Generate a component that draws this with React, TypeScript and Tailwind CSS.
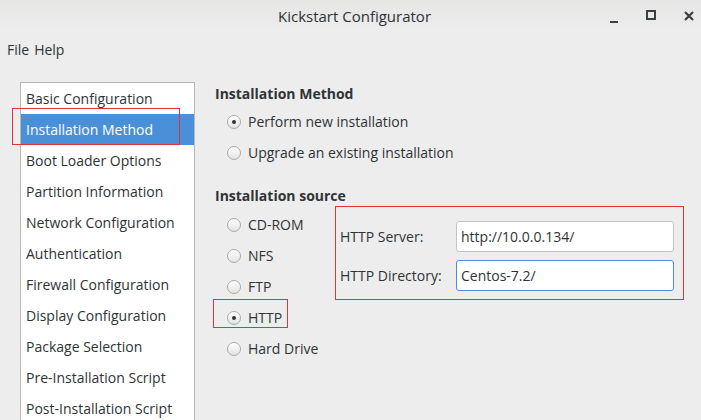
import React from "react";

const items = [
  "Basic Configuration",
  "Installation Method",
  "Boot Loader Options",
  "Partition Information",
  "Network Configuration",
  "Authentication",
  "Firewall Configuration",
  "Display Configuration",
  "Package Selection",
  "Pre-Installation Script",
  "Post-Installation Script",
];

function Radio({ checked }: { checked?: boolean }) {
  return (
    <span className="flex h-[14px] w-[14px] items-center justify-center rounded-full border border-[#a8aba6] bg-gradient-to-b from-[#ffffff] to-[#e3e3e1] shadow-[inset_0_1px_0_#fff]">
      {checked && <span className="h-[4px] w-[4px] rounded-full bg-[#2e3436]" />}
    </span>
  );
}

function RadioRow({ label, checked, boxed }: { label: string; checked?: boolean; boxed?: boolean }) {
  return (
    <div className="relative flex h-[31px] items-center gap-[7px] pl-[12px]">
      <Radio checked={checked} />
      <span>{label}</span>
      {boxed && (
        <div className="pointer-events-none absolute left-[-2px] top-[-3px] h-[29px] w-[75px] border border-[#d9383a]" />
      )}
    </div>
  );
}

export default function App() {
  return (
    <div
      className="relative h-[420px] w-[701px] overflow-hidden bg-[#ededed] text-[14px] text-[#2e3436]"
      style={{ fontFamily: '"Open Sans", "DejaVu Sans", sans-serif' }}
    >
      {/* Title bar */}
      <div className="flex h-[32px] items-center bg-gradient-to-b from-[#e6e6e5] to-[#ededed]">
        <div className="flex-1" />
        <div className="ml-[8px] text-[15px] text-[#2e3436]">Kickstart Configurator</div>
        <div className="flex flex-1 items-center justify-end">
          <svg width="20" height="20" viewBox="0 0 20 20" className="mr-[17px]">
            <rect x="6" y="15" width="8" height="2" fill="#3a3f41" />
          </svg>
          <svg width="20" height="20" viewBox="0 0 20 20" className="mr-[18px]">
            <rect x="6" y="5" width="8" height="8" fill="none" stroke="#3a3f41" strokeWidth="2" />
          </svg>
          <svg width="20" height="20" viewBox="0 0 20 20" className="mr-[2px]">
            <path d="M6 6 L14 14 M14 6 L6 14" stroke="#3a3f41" strokeWidth="2.2" />
          </svg>
        </div>
      </div>

      {/* Menu bar */}
      <div className="flex h-[34px] items-center gap-[5px] pl-[7px] text-[14px]">
        <span>File</span>
        <span>Help</span>
      </div>

      {/* Body */}
      <div className="flex pl-[20px] pt-[16px]">
        {/* Sidebar */}
        <div className="h-[400px] w-[175px] shrink-0 border border-[#b8b9b6] bg-white">
          {items.map((it, i) => (
            <div
              key={it}
              className={
                "relative flex h-[31px] items-center whitespace-nowrap pl-[5px] " +
                (i === 1 ? "bg-[#4a90d9] text-white" : "")
              }
            >
              {it}
              {i === 1 && (
                <div className="pointer-events-none absolute left-[-9px] top-[-6px] h-[37px] w-[168px] border border-[#d9383a]" />
              )}
            </div>
          ))}
        </div>

        {/* Right panel */}
        <div className="ml-[20px] flex-1 pt-[1px]">
          <div className="flex h-[20px] items-center font-bold">Installation Method</div>
          <div className="mt-[3px]">
            <RadioRow label="Perform new installation" checked />
            <RadioRow label="Upgrade an existing installation" />
          </div>
          <div className="mt-[17px] flex h-[20px] items-center font-bold">Installation source</div>
          <div className="mt-[1px] flex">
            <div className="w-[120px] shrink-0 pt-[3px]">
              <RadioRow label="CD-ROM" />
              <RadioRow label="NFS" />
              <RadioRow label="FTP" />
              <RadioRow label="HTTP" checked boxed />
              <RadioRow label="Hard Drive" />
            </div>
            <div className="flex h-[94px] w-[349px] flex-col gap-[8px] border border-[#d9383a] pb-[7px] pl-[4px] pr-[9px] pt-[14px]">
              <div className="flex items-center">
                <span className="w-[116px]">HTTP Server:</span>
                <div className="flex h-[31px] flex-1 items-center rounded-[3px] border border-[#c2c4bf] bg-white pl-[4px]">
                  http://10.0.0.134/
                </div>
              </div>
              <div className="flex items-center">
                <span className="w-[116px]">HTTP Directory:</span>
                <div className="flex h-[31px] flex-1 items-center rounded-[3px] border border-[#4a90d9] bg-white pl-[4px]">
                  Centos-7.2/
                </div>
              </div>
            </div>
          </div>
        </div>
      </div>
    </div>
  );
}
